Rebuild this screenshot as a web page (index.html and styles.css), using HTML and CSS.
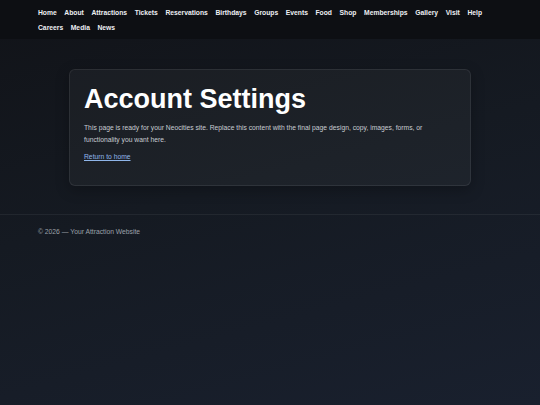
FILE: index.html
```html
<!DOCTYPE html>
<html lang="en">
<head>
<meta charset="utf-8">
<title>Account Settings</title>
<link rel="stylesheet" href="styles.css">
</head>
<body>
<header class="site-header">
  <nav class="nav">
    <a href="#">Home</a>
    <a href="#">About</a>
    <a href="#">Attractions</a>
    <a href="#">Tickets</a>
    <a href="#">Reservations</a>
    <a href="#">Birthdays</a>
    <a href="#">Groups</a>
    <a href="#">Events</a>
    <a href="#">Food</a>
    <a href="#">Shop</a>
    <a href="#">Memberships</a>
    <a href="#">Gallery</a>
    <a href="#">Visit</a>
    <a href="#">Help</a>
    <a href="#">Careers</a>
    <a href="#">Media</a>
    <a href="#">News</a>
  </nav>
</header>
<main class="main">
  <section class="card">
    <h1 class="title">Account Settings</h1>
    <p class="text">This page is ready for your Neocities site. Replace this content with the final page design, copy, images, forms, or functionality you want here.</p>
    <p class="back"><a href="#">Return to home</a></p>
  </section>
</main>
<footer class="site-footer">
  <p>© 2026 — Your Attraction Website</p>
</footer>
</body>
</html>
```

FILE: styles.css
```css
html, body {
  margin: 0;
  padding: 0;
}
body {
  min-height: 405px;
  font-family: "Liberation Sans", Arial, sans-serif;
  font-size: 6.75px;
  color: #e6e8eb;
  background: linear-gradient(165deg, #111318 0%, #151a22 45%, #19202e 100%);
}
.site-header {
  background: #0d0f13;
  padding: 4.5px 38px 4.5px;
}
.nav {
  display: flex;
  flex-wrap: wrap;
  column-gap: 7.6px;
  line-height: 15px;
}
.nav a {
  color: #eef0f3;
  font-weight: 700;
  text-decoration: none;
}
.main {
  padding: 30px 69px 28px;
}
.card {
  background: rgba(255, 255, 255, 0.035);
  border: 1px solid rgba(255, 255, 255, 0.08);
  border-radius: 6px;
  padding: 15px 14px;
  box-shadow: 0 4px 14px rgba(0, 0, 0, 0.25);
}
.title {
  margin: 0 0 7px;
  font-size: 27px;
  line-height: 1.1;
  font-weight: 700;
  color: #ffffff;
}
.text {
  margin: 0 0 5.5px;
  line-height: 12px;
  color: #c8ccd2;
}
.back {
  margin: 0 0 6.75px;
  line-height: 12px;
}
.back a {
  color: #8fb6ea;
  text-decoration: underline;
}
.site-footer {
  border-top: 1px solid rgba(255, 255, 255, 0.06);
  padding: 11px 38px;
}
.site-footer p {
  margin: 0;
  line-height: 12px;
  color: #9ca1a9;
}
```
